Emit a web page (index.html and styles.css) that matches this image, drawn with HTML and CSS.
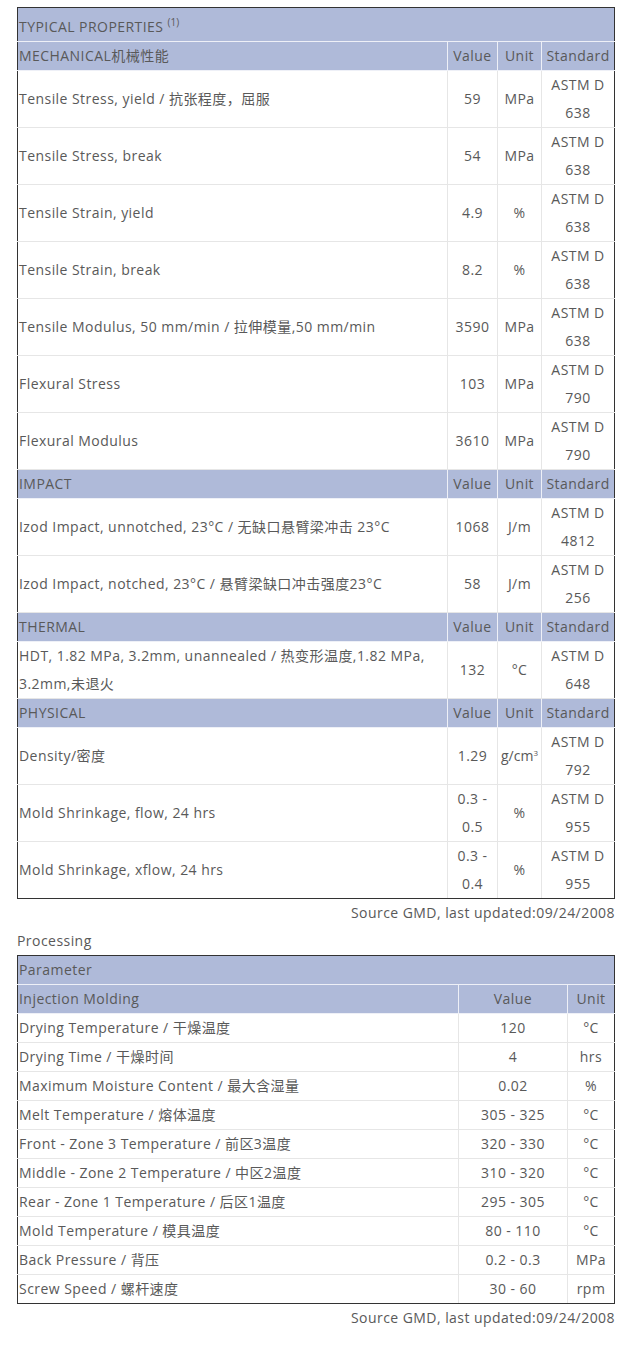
FILE: index.html
```html
<!DOCTYPE html>
<html>
<head>
<meta charset="utf-8">
<link rel="stylesheet" href="styles.css">
</head>
<body>
<div class="wrap">
  <table class="props">
    <colgroup>
      <col class="c-label"><col class="c-val"><col class="c-unit"><col class="c-std">
    </colgroup>
    <tr class="hd top"><td colspan="4">TYPICAL PROPERTIES <sup>(1)</sup></td></tr>
    <tr class="hd"><td>MECHANICAL机械性能</td><td class="ctr">Value</td><td class="ctr">Unit</td><td class="ctr">Standard</td></tr>
    <tr><td>Tensile Stress, yield / 抗张程度，屈服</td><td class="ctr">59</td><td class="ctr">MPa</td><td class="ctr">ASTM D 638</td></tr>
    <tr><td>Tensile Stress, break</td><td class="ctr">54</td><td class="ctr">MPa</td><td class="ctr">ASTM D 638</td></tr>
    <tr><td>Tensile Strain, yield</td><td class="ctr">4.9</td><td class="ctr">%</td><td class="ctr">ASTM D 638</td></tr>
    <tr><td>Tensile Strain, break</td><td class="ctr">8.2</td><td class="ctr">%</td><td class="ctr">ASTM D 638</td></tr>
    <tr><td>Tensile Modulus, 50 mm/min / 拉伸模量,50 mm/min</td><td class="ctr">3590</td><td class="ctr">MPa</td><td class="ctr">ASTM D 638</td></tr>
    <tr><td>Flexural Stress</td><td class="ctr">103</td><td class="ctr">MPa</td><td class="ctr">ASTM D 790</td></tr>
    <tr><td>Flexural Modulus</td><td class="ctr">3610</td><td class="ctr">MPa</td><td class="ctr">ASTM D 790</td></tr>
    <tr class="hd"><td>IMPACT</td><td class="ctr">Value</td><td class="ctr">Unit</td><td class="ctr">Standard</td></tr>
    <tr><td>Izod Impact, unnotched, 23°C / 无缺口悬臂梁冲击 23°C</td><td class="ctr">1068</td><td class="ctr">J/m</td><td class="ctr">ASTM D 4812</td></tr>
    <tr><td>Izod Impact, notched, 23°C / 悬臂梁缺口冲击强度23°C</td><td class="ctr">58</td><td class="ctr">J/m</td><td class="ctr">ASTM D 256</td></tr>
    <tr class="hd"><td>THERMAL</td><td class="ctr">Value</td><td class="ctr">Unit</td><td class="ctr">Standard</td></tr>
    <tr><td>HDT, 1.82 MPa, 3.2mm, unannealed / 热变形温度,1.82 MPa, 3.2mm,未退火</td><td class="ctr">132</td><td class="ctr">°C</td><td class="ctr">ASTM D 648</td></tr>
    <tr class="hd"><td>PHYSICAL</td><td class="ctr">Value</td><td class="ctr">Unit</td><td class="ctr">Standard</td></tr>
    <tr><td>Density/密度</td><td class="ctr">1.29</td><td class="ctr unit-sm">g/cm<span class="sup3">3</span></td><td class="ctr">ASTM D 792</td></tr>
    <tr><td>Mold Shrinkage, flow, 24 hrs</td><td class="ctr">0.3 - 0.5</td><td class="ctr">%</td><td class="ctr">ASTM D 955</td></tr>
    <tr><td>Mold Shrinkage, xflow, 24 hrs</td><td class="ctr">0.3 - 0.4</td><td class="ctr">%</td><td class="ctr">ASTM D 955</td></tr>
  </table>
  <p class="source">Source GMD, last updated:09/24/2008</p>
  <p class="section">Processing</p>
  <table class="proc">
    <colgroup>
      <col class="p-label"><col class="p-val"><col class="p-unit">
    </colgroup>
    <tr class="hd"><td colspan="3">Parameter</td></tr>
    <tr class="hd"><td>Injection Molding</td><td class="ctr">Value</td><td class="ctr">Unit</td></tr>
    <tr><td>Drying Temperature / 干燥温度</td><td class="ctr">120</td><td class="ctr">°C</td></tr>
    <tr><td>Drying Time / 干燥时间</td><td class="ctr">4</td><td class="ctr">hrs</td></tr>
    <tr><td>Maximum Moisture Content / 最大含湿量</td><td class="ctr">0.02</td><td class="ctr">%</td></tr>
    <tr><td>Melt Temperature / 熔体温度</td><td class="ctr">305 - 325</td><td class="ctr">°C</td></tr>
    <tr><td>Front - Zone 3 Temperature / 前区3温度</td><td class="ctr">320 - 330</td><td class="ctr">°C</td></tr>
    <tr><td>Middle - Zone 2 Temperature / 中区2温度</td><td class="ctr">310 - 320</td><td class="ctr">°C</td></tr>
    <tr><td>Rear - Zone 1 Temperature / 后区1温度</td><td class="ctr">295 - 305</td><td class="ctr">°C</td></tr>
    <tr><td>Mold Temperature / 模具温度</td><td class="ctr">80 - 110</td><td class="ctr">°C</td></tr>
    <tr><td>Back Pressure / 背压</td><td class="ctr">0.2 - 0.3</td><td class="ctr">MPa</td></tr>
    <tr><td>Screw Speed / 螺杆速度</td><td class="ctr">30 - 60</td><td class="ctr">rpm</td></tr>
  </table>
  <p class="source">Source GMD, last updated:09/24/2008</p>
</div>
</body>
</html>
```
FILE: styles.css
```css
html, body {
  margin: 0;
  padding: 0;
  background: #fff;
}
body {
  font-family: "Open Sans", "Noto Sans CJK SC", sans-serif;
  font-size: 14px;
  letter-spacing: 0.45px;
  line-height: 28px;
  color: #595959;
}
.wrap {
  padding: 7px 0 0 17px;
  width: 598px;
}
table {
  width: 598px;
  border-collapse: collapse;
  table-layout: fixed;
  border: 1px solid #333;
}
td {
  padding: 0 0 0 1px;
  border: 1px solid #e6e6e6;
  vertical-align: middle;
  line-height: 28px;
}
.ctr {
  text-align: center;
  padding: 0;
}
.unit-sm {
  letter-spacing: 0;
  white-space: nowrap;
}
.hd td {
  background: #afbad9;
  border-color: #eef0f7;
}
.hd.top td {
  padding-top: 5px;
}
table tr:first-child td {
  border-top: 1px solid #333;
}
table td:first-child {
  border-left: 1px solid #333;
}
table td:last-child {
  border-right: 1px solid #333;
}
table tr:last-child td {
  border-bottom: 1px solid #333;
}
sup {
  font-size: 10px;
  line-height: 0;
  vertical-align: 6px;
  letter-spacing: 0;
}
.sup3 {
  font-size: 8px;
  vertical-align: 5px;
  line-height: 0;
}
.c-label { width: 430px; }
.c-val { width: 50px; }
.c-unit { width: 44px; }
.c-std { width: 73px; }
.p-label { width: 441px; }
.p-val { width: 109px; }
.p-unit { width: 47px; }
.source {
  margin: 0;
  text-align: right;
}
.section {
  margin: 0;
}
```
